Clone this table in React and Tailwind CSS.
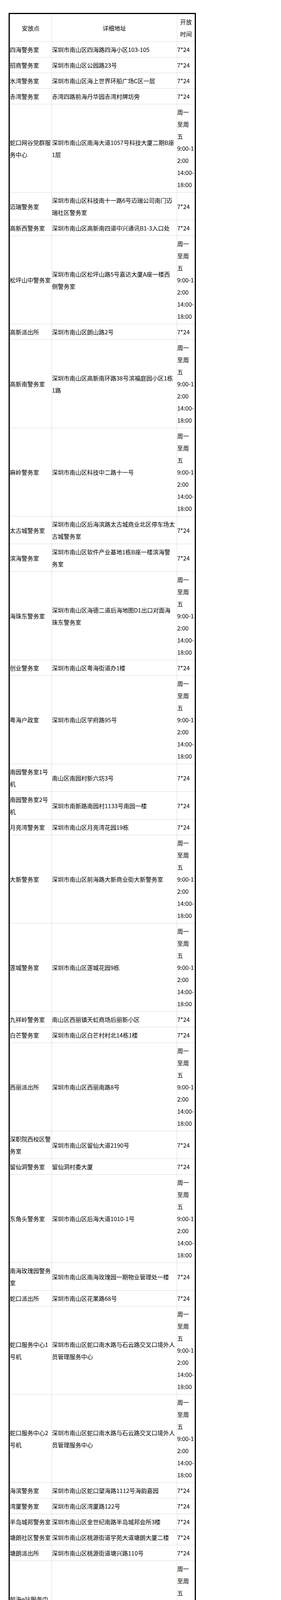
const W = ["周一", "至周", "五", "9:00-1", "2:00", "14:00-", "18:00"];
const D = ["7*24"];

const bay = (n, floor) => [
  ["深圳湾生态园服", `务中心${n}号机`],
  ["深圳市南山区白石路3609号深圳湾科技生态园9", `栋A座${floor}楼南山公安分局深圳湾服务中心`],
  D,
];

const rows = [
  [["四海警务室"], ["深圳市南山区四海路四海小区103-105"], D],
  [["招商警务室"], ["深圳市南山区公园路23号"], D],
  [["水湾警务室"], ["深圳市南山区海上世界环船广场C区一层"], D],
  [["赤湾警务室"], ["赤湾四路前海丹华园赤湾村牌坊旁"], D],
  [["蛇口网谷党群服", "务中心"], ["深圳市南山区南海大道1057号科技大厦二期B座", "1层"], W],
  [["迈瑞警务室"], ["深圳市南山区科技南十一路6号迈瑞公司南门迈", "瑞社区警务室"], D],
  [["高新西警务室"], ["深圳市南山区高新南四道中兴通讯B1-3入口处"], D],
  [["松坪山中警务室"], ["深圳市南山区松坪山路5号嘉达大厦A座一楼西", "侧警务室"], W],
  [["高新派出所"], ["深圳市南山区朗山路2号"], D],
  [["高新南警务室"], ["深圳市南山区高新南环路38号滨福庭园小区1栋", "1路"], W],
  [["麻岭警务室"], ["深圳市南山区科技中二路十一号"], W],
  [["太古城警务室"], ["深圳市南山区后海滨路太古城商业北区停车场太", "古城警务室"], D],
  [["滨海警务室"], ["深圳市南山区软件产业基地1栋B座一楼滨海警", "务室"], D],
  [["海珠东警务室"], ["深圳市南山区海德二道后海地图D1出口对面海", "珠东警务室"], W],
  [["创业警务室"], ["深圳市南山区粤海街道办1楼"], D],
  [["粤海户政室"], ["深圳市南山区学府路95号"], W],
  [["南园警务室1号", "机"], ["南山区南园村新六坊3号"], D],
  [["南园警务室2号", "机"], ["深圳市南新路南园村1133号南园一楼"], D],
  [["月亮湾警务室"], ["深圳市南山区月亮湾花园19栋"], D],
  [["大新警务室"], ["深圳市南山区前海路大新商业街大新警务室"], W],
  [["莲城警务室"], ["深圳市南山区莲城花园9栋"], W],
  [["九祥岭警务室"], ["南山区西丽镇天虹商场后丽新小区"], D],
  [["白芒警务室"], ["深圳市南山区白芒村村北14栋1楼"], D],
  [["西丽派出所"], ["深圳市南山区西丽南路8号"], W],
  [["深职院西校区警", "务室"], ["深圳市南山区留仙大道2190号"], D],
  [["留仙洞警务室"], ["留仙洞村委大厦"], D],
  [["东角头警务室"], ["深圳市南山区后海大道1010-1号"], W],
  [["南海玫瑰园警务", "室"], ["深圳市南山区南海玫瑰园一期物业管理处一楼"], D],
  [["蛇口派出所"], ["深圳市南山区花果路68号"], D],
  [["蛇口服务中心1", "号机"], ["深圳市南山区蛇口南水路与石云路交叉口境外人", "员管理服务中心"], W],
  [["蛇口服务中心2", "号机"], ["深圳市南山区蛇口南水路与石云路交叉口境外人", "员管理服务中心"], W],
  [["海滨警务室"], ["深圳市南山区蛇口望海路1112号海韵嘉园"], D],
  [["湾厦警务室"], ["深圳市南山区湾厦路122号"], D],
  [["半岛城邦警务室"], ["深圳市南山区金世纪南路半岛城邦会所3楼"], D],
  [["塘朗社区警务室"], ["深圳市南山区桃源街道学苑大道塘朗大厦二楼"], D],
  [["塘朗派出所"], ["深圳市南山区桃源街道塘兴路110号"], D],
  [["前海e站服务中", "心"], ["深圳市南山区前海一路19号"], W],
  [["香山里警务室"], ["南山区华侨城侨北三街8号香山里二期"], D],
  [["光华警务室"], ["深圳市南山区华侨城光华街9栋107室"], D],
  [["沙河户政室"], ["深圳市南山区石洲北路12号"], D],
  [["下白石警务室"], ["深圳市南山区沙河街金三角大厦"], W],
  bay(1, 11),
  bay(2, 12),
  bay(3, 1),
  bay(4, 2),
  bay(5, 3),
  bay(6, 4),
  bay(7, 5),
  bay(8, 6),
  bay(9, 7),
  bay(10, 8),
  bay(11, 9),
  bay(12, 10),
  [["南山区行政服务", "大厅1号机"], ["深圳湾体育中心北门（南山区行政服务大厅"], W],
  [["南山区行政服务", "大厅2号机"], ["深圳湾体育中心北门（南山区行政服务大厅"], W],
];

function Cell({ lines, lastCol, lastRow, head }) {
  return (
    <div
      className={`flex flex-col justify-center py-1 ${head ? "items-center text-center" : ""} ${lastCol ? "" : "border-r border-[#dcdcdc]"} ${lastRow ? "" : "border-b border-[#dcdcdc]"}`}
    >
      {lines.map((l, i) => (
        <div key={i} className="whitespace-nowrap">
          {l}
        </div>
      ))}
    </div>
  );
}

export default function App() {
  return (
    <div className="min-h-[5967px] bg-white pt-[33px] pl-[22px] font-['Noto_Sans_CJK_SC','Noto_Sans',sans-serif] text-[15px] leading-[31px] text-black">
      <div className="w-[480px] border-[3px] border-black">
        <div className="grid grid-cols-[108px_321px_45px]">
          <Cell head lines={["安放点"]} />
          <Cell head lines={["详细地址"]} />
          <Cell head lastCol lines={["开放", "时间"]} />
          {rows.map((r, i) => {
            const lastRow = i === rows.length - 1;
            return [
              <Cell key={`${i}a`} lines={r[0]} lastRow={lastRow} />,
              <Cell key={`${i}b`} lines={r[1]} lastRow={lastRow} />,
              <Cell key={`${i}c`} lines={r[2]} lastRow={lastRow} lastCol />,
            ];
          })}
        </div>
      </div>
    </div>
  );
}
